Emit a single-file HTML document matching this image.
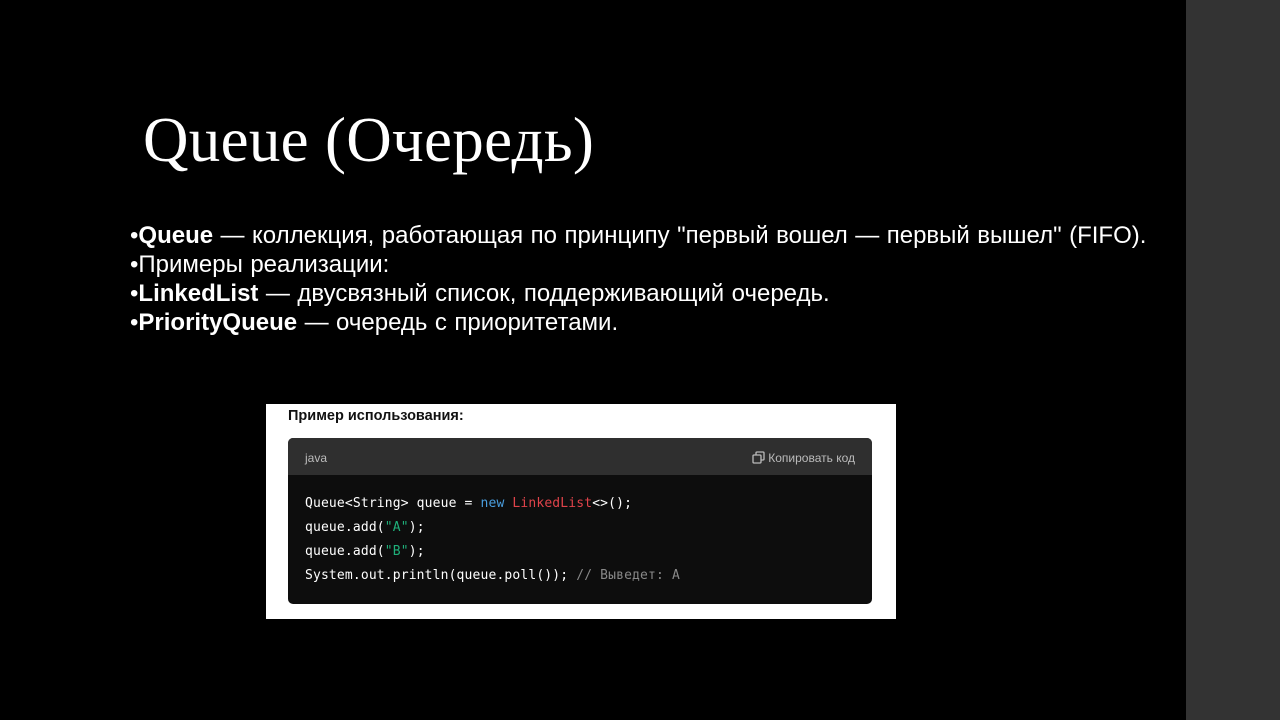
<!DOCTYPE html>
<html><head><meta charset="utf-8"><style>
body{margin:0;width:1280px;height:720px;background:#000;position:relative;overflow:hidden;font-family:"Liberation Sans",sans-serif}
.side{position:absolute;left:1186px;top:0;width:94px;height:720px;background:#333}
h1{position:absolute;left:143px;top:104px;margin:0;font-weight:400;color:#fff;font-family:"Liberation Serif",serif;font-size:63px;letter-spacing:0.3px}
.txt{position:absolute;left:130px;top:221px;color:#fff;font-size:24px;line-height:29px;white-space:nowrap;word-spacing:0.8px}
.card{position:absolute;left:266px;top:404px;width:630px;height:215px;background:#fff}
.card .t{position:absolute;left:22px;top:4px;font-weight:bold;font-size:14.5px;color:#111}
.code{position:absolute;left:22px;top:34px;width:584px;height:166px;background:#0d0d0d;border-radius:5px;overflow:hidden}
.hd{height:37px;background:#2f2f2f;color:#bbb;font-size:12px;position:relative}
.hd .l{position:absolute;left:17px;top:13px}
.hd .r{position:absolute;right:17px;top:13px}
pre{margin:0;position:absolute;left:17px;top:54px;font:13px/24px "DejaVu Sans Mono","Liberation Mono",monospace;color:#fff;letter-spacing:0.15px}
.b{color:#4a9fe0}.rd{color:#e0434a}.g{color:#1fb07a}.c{color:#888}
</style></head><body>
<div class="side"></div>
<h1>Queue (Очередь)</h1>
<div class="txt">•<b>Queue</b> — коллекция, работающая по принципу "первый вошел — первый вышел" (FIFO).<br>•Примеры реализации:<br>•<b>LinkedList</b> — двусвязный список, поддерживающий очередь.<br>•<b>PriorityQueue</b> — очередь с приоритетами.</div>
<div class="card"><div class="t">Пример использования:</div>
<div class="code"><div class="hd"><span class="l">java</span><span class="r"><svg width="13" height="13" viewBox="0 0 13 13" style="vertical-align:-2px"><rect x="1" y="4" width="8" height="8" rx="1" fill="none" stroke="#bbb" stroke-width="1.3"/><path d="M4 4V2a1 1 0 0 1 1-1h6a1 1 0 0 1 1 1v6a1 1 0 0 1-1 1H9" fill="none" stroke="#bbb" stroke-width="1.3"/></svg> Копировать код</span></div>
<pre>Queue&lt;String&gt; queue = <span class="b">new</span> <span class="rd">LinkedList</span>&lt;&gt;();
queue.add(<span class="g">"A"</span>);
queue.add(<span class="g">"B"</span>);
System.out.println(queue.poll()); <span class="c">// Выведет: A</span></pre></div></div>
</body></html>
